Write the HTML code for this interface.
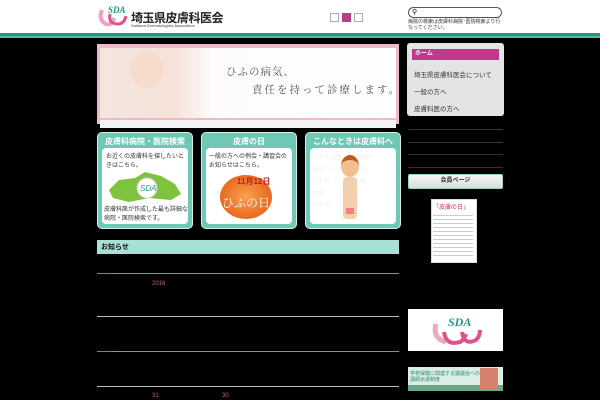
<!DOCTYPE html>
<html><head><meta charset="utf-8"><style>
*{margin:0;padding:0;box-sizing:border-box}
body{width:600px;height:400px;background:#000;position:relative;overflow:hidden;font-family:"Liberation Sans","Noto Sans CJK JP",sans-serif}
.a{position:absolute}
</style></head><body>
<div class="a" style="left:0;top:0;width:600px;height:33px;background:#fff"></div>
<div class="a" style="left:0;top:33px;width:600px;height:3px;background:#1c9a82"></div>
<div class="a" style="left:0;top:36px;width:600px;height:2px;background:#5cb8a6"></div>
<svg class="a" style="left:96px;top:4px" width="36" height="24" viewBox="0 0 36 24">
<path d="M6 6 Q2 16 10 20 Q16 22 18 14" stroke="#f0a0c0" stroke-width="4" fill="none"/>
<path d="M14 10 Q12 20 22 20 Q28 20 30 12" stroke="#e0508c" stroke-width="3" fill="none"/>
<text x="12" y="9" font-size="9" font-style="italic" font-weight="bold" fill="#1a9a80" font-family="Liberation Serif">SDA</text>
</svg>
<div class="a" style="left:131px;top:9px;font-size:12px;font-weight:bold;color:#222;letter-spacing:-0.5px">埼玉県皮膚科医会</div>
<div class="a" style="left:131px;top:23px;font-size:4px;color:#444">Saitama Dermatologists Association</div>
<div class="a" style="left:330px;top:13px;width:9px;height:9px;border:1px solid #aaa;background:#fff"></div>
<div class="a" style="left:342px;top:13px;width:9px;height:9px;background:#c0398a"></div>
<div class="a" style="left:354px;top:13px;width:9px;height:9px;border:1px solid #aaa;background:#fff"></div>
<div class="a" style="left:408px;top:7px;width:94px;height:11px;border:1px solid #555;border-radius:6px;background:#fff;font-size:7px;line-height:9px;padding-left:3px">&#9906;</div>
<div class="a" style="left:408px;top:19px;width:96px;font-size:5px;line-height:6px;color:#333">病院の検索は皮膚科病院･医院検索より行なってください。</div>
<div class="a" style="left:97px;top:44px;width:302px;height:80px;background:#f0b8cc"></div>
<div class="a" style="left:100px;top:48px;width:296px;height:70px;background:linear-gradient(90deg,#f1e6e0 0%,#f6e2d8 25%,#fdfbfb 38%,#fff 100%)"></div>
<div class="a" style="left:130px;top:52px;width:34px;height:36px;border-radius:50%;background:#f6dccd"></div>
<div class="a" style="left:100px;top:120px;width:296px;height:8px;background:#f4f4f4"></div>
<div class="a" style="left:226px;top:64px;font-size:10.5px;color:#555;font-family:'Noto Serif CJK SC',serif;letter-spacing:1px">ひふの病気、</div>
<div class="a" style="left:252px;top:82px;font-size:10.5px;color:#555;font-family:'Noto Serif CJK SC',serif;letter-spacing:2px">責任を持って診療します。</div>
<div class="a" style="left:97px;top:132px;width:96px;height:97px;background:#6ec8b4;border-radius:5px;border:1px solid #d8efe9"></div>
<div class="a" style="left:97px;top:136px;width:96px;text-align:center;color:#fff;font-size:8px;font-weight:bold">皮膚科病院・医院検索</div>
<div class="a" style="left:102px;top:148px;width:86px;height:76px;background:#fff;border-radius:4px"></div>
<div class="a" style="left:106px;top:153px;width:82px;font-size:6px;line-height:9px;color:#333">お近くの皮膚科を探したいときはこちら。</div>
<svg class="a" style="left:105px;top:168px" width="80" height="38"><path d="M4 22 L14 12 L30 10 L40 4 L56 8 L70 16 L76 26 L66 32 L44 30 L24 34 L8 30Z" fill="#7ec23e"/><circle cx="42" cy="20" r="10" fill="#fff" stroke="#ccc"/><text x="35" y="23" font-size="8" fill="#1a9a80" font-style="italic">SDA</text></svg>
<div class="a" style="left:104px;top:206px;width:86px;font-size:6px;line-height:9px;color:#333">皮膚科医が作成した最も詳細な病院・医院検索です。</div>
<div class="a" style="left:201px;top:132px;width:96px;height:97px;background:#6ec8b4;border-radius:5px;border:1px solid #d8efe9"></div>
<div class="a" style="left:201px;top:136px;width:96px;text-align:center;color:#fff;font-size:8px;font-weight:bold">皮膚の日</div>
<div class="a" style="left:206px;top:148px;width:86px;height:76px;background:#fff;border-radius:4px"></div>
<div class="a" style="left:209px;top:153px;width:82px;font-size:6px;line-height:9px;color:#333">一般の方への例会・講習会のお知らせはこちら。</div>
<div class="a" style="left:220px;top:175px;width:52px;height:44px;border-radius:50%;background:radial-gradient(#f9a050,#e86a20 70%,#fff)"></div>
<div class="a" style="left:237px;top:176px;font-size:8px;font-weight:bold;color:#c02020">11月12日</div>
<div class="a" style="left:220px;top:194px;width:52px;text-align:center;font-size:12px;color:#fff;font-family:'Noto Serif CJK SC',serif">ひふの日</div>
<div class="a" style="left:305px;top:132px;width:96px;height:97px;background:#6ec8b4;border-radius:5px;border:1px solid #d8efe9"></div>
<div class="a" style="left:305px;top:136px;width:96px;text-align:center;color:#fff;font-size:8px;font-weight:bold">こんなときは皮膚科へ</div>
<div class="a" style="left:310px;top:148px;width:86px;height:76px;background:#fff;border-radius:4px"></div>
<div class="a" style="left:312px;top:152px;width:82px;font-size:6px;line-height:12px;color:#eee">フケ・湿疹　爪の悩み<br>多汗　シミ　手あれ<br>ニキビ　　うおのめ<br>水虫　　　ヤケド<br>口内炎　　シワ</div>
<div class="a" style="left:341px;top:155px;width:18px;height:22px;border-radius:50%;background:#f0c090;border-top:5px solid #c05a20"></div>
<div class="a" style="left:343px;top:177px;width:14px;height:42px;background:#f3cfae;border-radius:4px"></div>
<div class="a" style="left:346px;top:208px;width:8px;height:6px;background:#f08080"></div>
<div class="a" style="left:97px;top:240px;width:302px;height:14px;background:#a8e0d6"></div>
<div class="a" style="left:101px;top:242px;font-size:7px;font-weight:bold;color:#111">お知らせ</div>
<div class="a" style="left:97px;top:273px;width:302px;height:1px;background:#4ab098"></div>
<div class="a" style="left:97px;top:273px;width:14px;height:1px;background:#c06088"></div>
<div class="a" style="left:152px;top:281px;font-size:6px;color:#c06088">2016</div>
<div class="a" style="left:97px;top:316px;width:302px;height:1px;background:#bbb"></div>
<div class="a" style="left:97px;top:351px;width:302px;height:1px;background:#4ab098"></div>
<div class="a" style="left:97px;top:351px;width:14px;height:1px;background:#c06088"></div>
<div class="a" style="left:97px;top:386px;width:302px;height:1px;background:#bbb"></div>
<div class="a" style="left:152px;top:393px;font-size:6px;color:#c06088">31</div>
<div class="a" style="left:222px;top:393px;font-size:6px;color:#c06088">30</div>
<div class="a" style="left:407px;top:43px;width:97px;height:73px;background:#e4e4e4;border-radius:3px"></div>
<div class="a" style="left:412px;top:49px;width:87px;height:11px;background:#c0398a;color:#fff;font-size:6px;font-weight:bold;line-height:11px;padding-left:3px">ホーム</div>
<div class="a" style="left:414px;top:69px;font-size:6.5px;color:#333">埼玉県皮膚科医会について</div>
<div class="a" style="left:414px;top:86px;font-size:6.5px;color:#333">一般の方へ</div>
<div class="a" style="left:414px;top:103px;font-size:6.5px;color:#333">皮膚科医の方へ</div>
<div class="a" style="left:408px;top:129px;width:95px;height:1px;background:#333"></div>
<div class="a" style="left:408px;top:142px;width:95px;height:1px;background:#333"></div>
<div class="a" style="left:408px;top:154px;width:95px;height:1px;background:#333"></div>
<div class="a" style="left:408px;top:167px;width:95px;height:1px;background:#333"></div>
<div class="a" style="left:408px;top:174px;width:95px;height:15px;background:linear-gradient(#f6f6f6,#dcdcdc);border:1px solid #9cd4c6;border-radius:2px;text-align:center;font-size:6px;font-weight:bold;line-height:13px;color:#333">会員ページ</div>
<div class="a" style="left:431px;top:199px;width:46px;height:64px;background:#fff;border:1px solid #ddd"></div>
<div class="a" style="left:433px;top:202px;font-size:6px;color:#c03060">「皮膚の日」</div>
<div class="a" style="left:433px;top:212px;width:40px;height:44px;background:repeating-linear-gradient(#fff 0 3px,#ccc 3px 4px)"></div>
<div class="a" style="left:408px;top:309px;width:95px;height:42px;background:#fff"></div>
<svg class="a" style="left:428px;top:310px" width="56" height="40"><path d="M8 14 Q4 28 18 32" stroke="#f0a8c0" stroke-width="5" fill="none"/><path d="M16 22 Q18 36 32 32 Q36 30 38 24" stroke="#e0508c" stroke-width="4" fill="none"/><path d="M34 22 Q36 36 48 30 Q52 26 52 20" stroke="#e0508c" stroke-width="4" fill="none"/><text x="20" y="16" font-size="12" font-style="italic" font-weight="bold" fill="#1a9a80" font-family="Liberation Serif">SDA</text></svg>
<div class="a" style="left:408px;top:367px;width:95px;height:24px;background:#dbeee6"></div>
<div class="a" style="left:410px;top:371px;font-size:5px;color:#2a8a70;width:70px;line-height:6px">学校保健に関連する議議会への講師派遣制度</div>
<div class="a" style="left:408px;top:385px;width:95px;height:6px;background:#6aa88a"></div>
<div class="a" style="left:480px;top:368px;width:18px;height:22px;background:#d88070"></div>
</body></html>
